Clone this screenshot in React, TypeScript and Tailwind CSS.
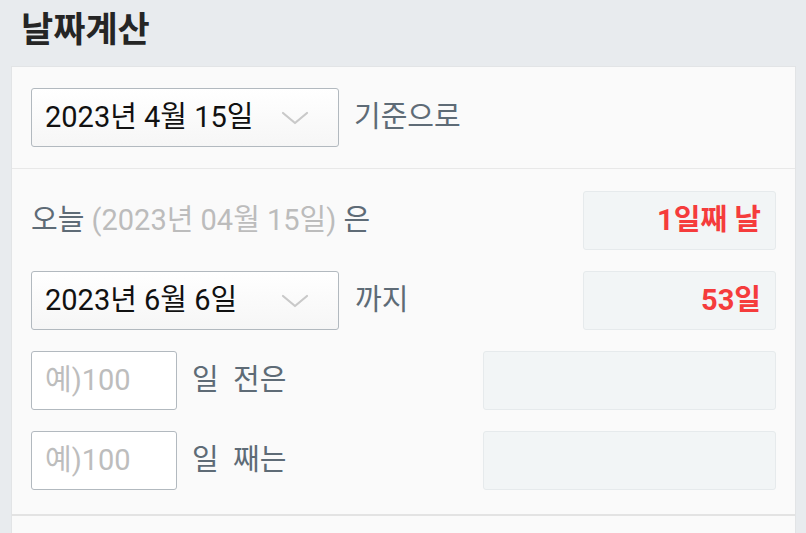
import React from "react";

const font = "font-['Roboto','Noto_Sans_CJK_KR',sans-serif]";

function Chevron() {
  return (
    <svg width="28" height="14" viewBox="0 0 28 14" fill="none">
      <path d="M2 2 L14 12 L26 2" stroke="#c9c9c9" strokeWidth="2.2" strokeLinecap="round" strokeLinejoin="round" />
    </svg>
  );
}

function DateSelect({ label }: { label: string }) {
  return (
    <div className="flex h-[59px] w-[308px] shrink-0 items-center justify-between rounded-[3px] border border-[#b2b9bf] bg-gradient-to-b from-[#ffffff] to-[#f6f6f6] pl-[13px] pr-[29px]">
      <span className="text-[29px] leading-none text-[#111111]">{label}</span>
      <Chevron />
    </div>
  );
}

function ResultBox({ w, text }: { w: string; text?: string }) {
  return (
    <div className={`flex h-[59px] ${w} shrink-0 items-center justify-end rounded-[3px] border border-[#e6eaec] bg-[#f2f5f6] pr-[14px]`}>
      {text && <span className="text-[29px] font-bold leading-none text-[#f53c3c]">{text}</span>}
    </div>
  );
}

function NumInput() {
  return (
    <div className="flex h-[59px] w-[146px] shrink-0 items-center rounded-[3px] border border-[#b2b9bf] bg-white pl-[13px]">
      <span className="text-[29px] leading-none text-[#bdbdbd]">예)100</span>
    </div>
  );
}

export default function App() {
  return (
    <div className={`h-[533px] w-[806px] overflow-hidden bg-[#e8ebee] ${font}`}>
      <div className="flex h-[66px] items-center pl-[21px] pb-[6px]">
        <h1 className="text-[35px] font-bold leading-none text-[#252525]">날짜계산</h1>
      </div>
      <div className="ml-[11px] w-[785px] border border-[#e2e4e6] bg-[#fafafa]">
        <div className="flex h-[102px] items-center gap-[15px] border-b border-[#e8e8e8] px-[19px]">
          <DateSelect label="2023년 4월 15일" />
          <span className="text-[29px] leading-none text-[#5e6b76]">기준으로</span>
        </div>
        <div className="flex flex-col gap-[21px] border-b-2 border-[#e3e3e3] pb-[24px] pl-[19px] pr-[19px] pt-[22px]">
          <div className="flex items-center justify-between">
            <span className="text-[29px] leading-none text-[#5e6b76]">
              오늘 <span className="text-[#bcbcbc]">(2023년 04월 15일)</span> 은
            </span>
            <ResultBox w="w-[193px]" text="1일째 날" />
          </div>
          <div className="flex items-center">
            <DateSelect label="2023년 6월 6일" />
            <span className="ml-[16px] text-[29px] leading-none text-[#5e6b76]">까지</span>
            <div className="flex-1" />
            <ResultBox w="w-[193px]" text="53일" />
          </div>
          <div className="flex items-center">
            <NumInput />
            <span className="ml-[15px] text-[29px] leading-none text-[#5e6b76]">
              일&nbsp; 전은
            </span>
            <div className="flex-1" />
            <ResultBox w="w-[293px]" />
          </div>
          <div className="flex items-center">
            <NumInput />
            <span className="ml-[15px] text-[29px] leading-none text-[#5e6b76]">
              일&nbsp; 째는
            </span>
            <div className="flex-1" />
            <ResultBox w="w-[293px]" />
          </div>
        </div>
        <div className="h-[40px]" />
      </div>
    </div>
  );
}
